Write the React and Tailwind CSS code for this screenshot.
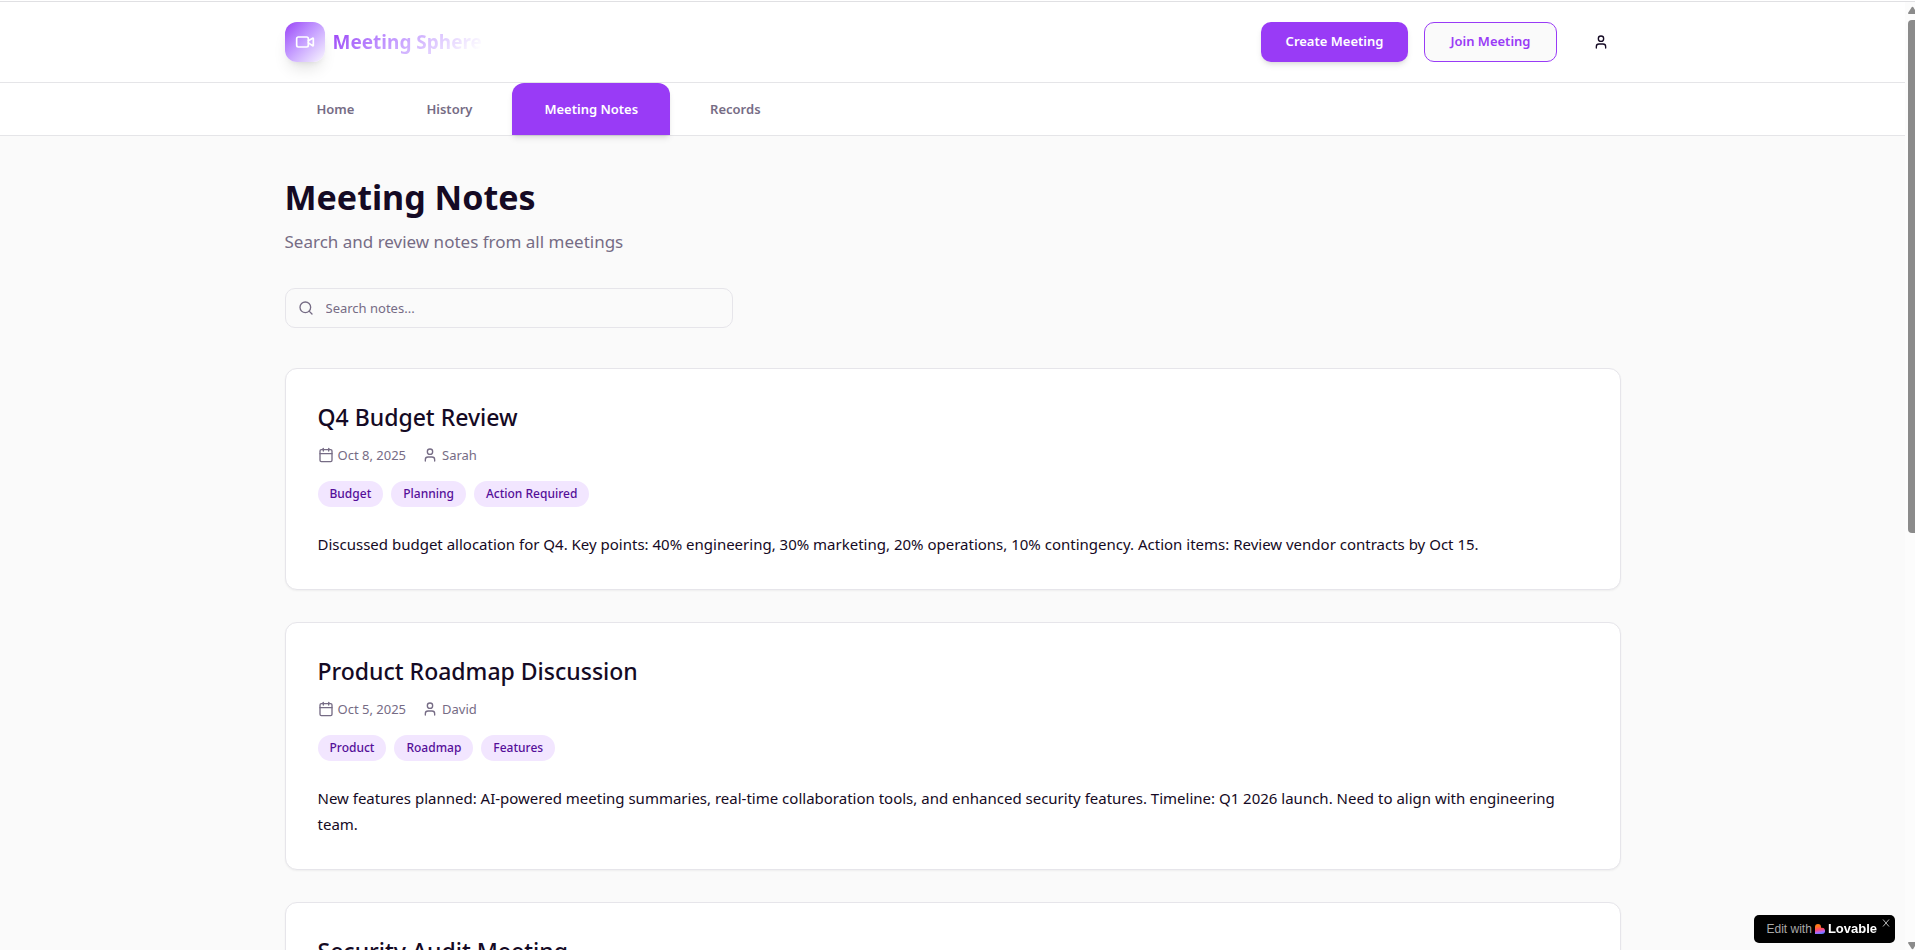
import { Calendar, Search, User, Video } from "lucide-react";

const tabs = [
  { label: "Home" },
  { label: "History" },
  { label: "Meeting Notes", active: true },
  { label: "Records" },
];

const notes = [
  {
    title: "Q4 Budget Review",
    date: "Oct 8, 2025",
    author: "Sarah",
    tags: ["Budget", "Planning", "Action Required"],
    body: "Discussed budget allocation for Q4. Key points: 40% engineering, 30% marketing, 20% operations, 10% contingency. Action items: Review vendor contracts by Oct 15.",
  },
  {
    title: "Product Roadmap Discussion",
    date: "Oct 5, 2025",
    author: "David",
    tags: ["Product", "Roadmap", "Features"],
    body: "New features planned: AI-powered meeting summaries, real-time collaboration tools, and enhanced security features. Timeline: Q1 2026 launch. Need to align with engineering team.",
  },
  { title: "Security Audit Meeting", tags: [] },
];

function Header() {
  return (
    <header className="border-b border-[#e5e5e8] bg-white">
      <div className="mx-auto flex h-20 max-w-[1400px] items-center justify-between px-8">
        <a href="#home" className="flex items-center gap-2">
          <span className="flex size-10 items-center justify-center rounded-xl bg-linear-135 from-[#9b3cf6] to-[#faf7ff] shadow-lg">
            <Video className="size-5 text-white" />
          </span>
          <span className="bg-linear-135 from-[#9b3cf6] to-white to-95% bg-clip-text text-[19px] leading-7 font-bold text-transparent">
            Meeting Sphere
          </span>
        </a>
        <div className="flex items-center gap-4">
          <button className="h-10 rounded-[10px] bg-[#993bf6] px-[25px] text-[13px] font-semibold text-white shadow-md">
            Create Meeting
          </button>
          <button className="h-10 rounded-[10px] border border-[#993bf6] bg-[#fafafa] px-[25px] text-[13px] font-semibold text-[#993bf6]">
            Join Meeting
          </button>
          <button aria-label="Account" className="ml-2 flex size-10 items-center justify-center">
            <User className="size-4 text-[#150a24]" />
          </button>
        </div>
      </div>
    </header>
  );
}

function Tabs() {
  return (
    <nav className="border-b border-[#e5e5e8] bg-white">
      <div className="mx-auto flex max-w-[1400px] gap-2 px-8">
        {tabs.map((tab) => (
          <a
            key={tab.label}
            href="#tab"
            className={
              tab.active
                ? "rounded-t-xl bg-[#993bf6] px-8 py-4 text-[13px] leading-5 font-semibold text-white shadow-md"
                : "px-8 py-4 text-[13px] leading-5 font-semibold text-[#766c85]"
            }
          >
            {tab.label}
          </a>
        ))}
      </div>
    </nav>
  );
}

function NoteCard({ note }) {
  return (
    <article className="rounded-xl border border-[#e6e5ea] bg-white p-8 shadow-xs">
      <h2 className="text-[23px] leading-8 font-medium text-[#150a24]">{note.title}</h2>
      {note.date && (
        <div className="mt-3 flex gap-4 text-[13px] leading-5 text-[#766c85]">
          <span className="flex items-center gap-1">
            <Calendar className="size-4" />
            {note.date}
          </span>
          <span className="flex items-center gap-1">
            <User className="size-4" />
            {note.author}
          </span>
        </div>
      )}
      <div className="mt-4 flex gap-2">
        {note.tags.map((tag) => (
          <span
            key={tag}
            className="rounded-full bg-[#f2e6ff] px-3 py-1 text-xs leading-[18px] font-medium text-[#550f99]"
          >
            {tag}
          </span>
        ))}
      </div>
      <p className="mt-6 text-[15px] leading-[26px] text-[#150a24]">{note.body}</p>
    </article>
  );
}

function Scrollbar() {
  return (
    <div aria-hidden="true" className="flex w-[10px] shrink-0 flex-col items-end bg-[#fcfcfc] pt-1">
      <svg viewBox="0 0 7 8" className="h-2 w-[7px]">
        <path d="M0 7 3.5 1.5Q4.5 0 5.5 1.5L7 4V8H1Q-.3 8 0 7Z" fill="#8b8b8b" />
      </svg>
      <div className="mt-[6px] h-[513px] w-[7px] rounded-l bg-[#8b8b8b]" />
      <svg viewBox="0 0 7 8" className="mt-auto h-2 w-[7px]">
        <path d="M0 1 3.5 6.5Q4.5 8 5.5 6.5L7 4V0H1Q-.3 0 0 1Z" fill="#8b8b8b" />
      </svg>
    </div>
  );
}

function LovableBadge() {
  return (
    <div className="fixed right-5 bottom-[7px] flex h-7 items-center rounded-[5px] bg-black pr-[5px] pl-[13px] font-['Liberation_Sans',sans-serif] text-xs">
      <a href="#edit" className="flex items-center gap-[3px] text-[#a9a9a9]">
        Edit with
        <svg viewBox="0 0 10 10" className="size-[10px]" aria-hidden="true">
          <defs>
            <linearGradient id="heart" x1="0.3" y1="0" x2="0.5" y2="1">
              <stop offset="0.2" stopColor="#ff7a1a" />
              <stop offset="0.55" stopColor="#ff4a6a" />
              <stop offset="0.8" stopColor="#b565f5" />
              <stop offset="1" stopColor="#5a7bff" />
            </linearGradient>
          </defs>
          <path d="M0 3a3 3 0 0 1 6 0v.8h1a3.1 3.1 0 0 1 0 6.2H0Z" fill="url(#heart)" />
        </svg>
        <span className="text-[13px] font-bold text-white">Lovable</span>
      </a>
      <button aria-label="Close" className="ml-[5px] self-start pt-1">
        <svg viewBox="0 0 8 8" className="size-2" fill="none" stroke="#b5b5b5">
          <path d="M1 .5 7 7.5M7 .5 1 7.5" />
        </svg>
      </button>
    </div>
  );
}

export default function App() {
  return (
    <div className="h-screen bg-white pt-px font-['Noto_Sans','Open_Sans',sans-serif]">
      <div className="flex h-full border-t border-[#e0e0e3]">
        <div className="min-w-0 flex-1 overflow-y-auto bg-[#fafafa] [scrollbar-width:none]">
          <Header />
          <Tabs />
          <main className="mx-auto max-w-[1400px] px-8 py-10">
            <h1 className="text-[34px] leading-[42px] font-bold text-[#150a24]">Meeting Notes</h1>
            <p className="mt-[10px] text-[17px] leading-7 text-[#766c85]">Search and review notes from all meetings</p>
            <label className="mt-8 flex h-10 max-w-md items-center gap-3 rounded-[10px] border border-[#e6e5ea] px-3 text-[#766c85]">
              <Search className="size-4 shrink-0" />
              <input
                type="text"
                aria-label="Search notes"
                placeholder="Search notes..."
                className="min-w-0 flex-1 bg-transparent text-[13px] leading-5 outline-none placeholder:text-[#766c85]"
              />
            </label>
            <div className="mt-10 flex flex-col gap-8">
              {notes.map((note) => (
                <NoteCard key={note.title} note={note} />
              ))}
            </div>
          </main>
        </div>
        <Scrollbar />
      </div>
      <LovableBadge />
    </div>
  );
}
